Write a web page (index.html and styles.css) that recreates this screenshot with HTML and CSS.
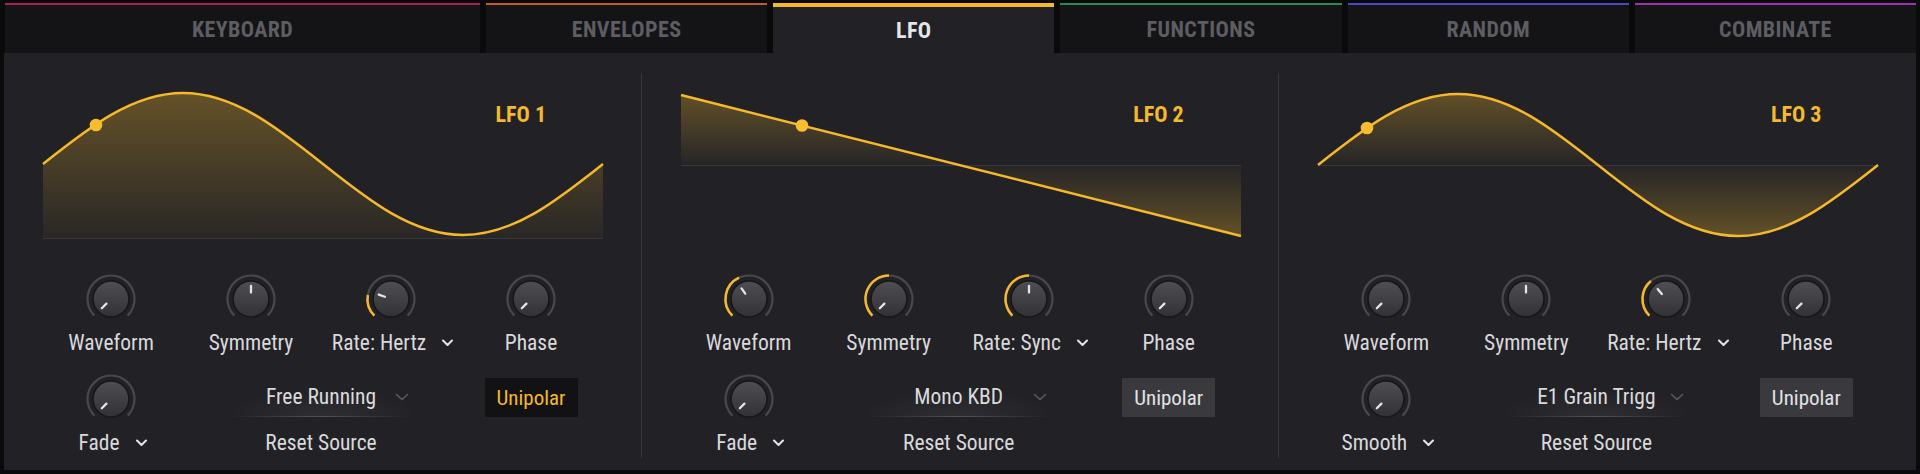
FILE: index.html
```html
<!DOCTYPE html>
<html>
<head>
<meta charset="utf-8">
<link rel="stylesheet" href="styles.css">
</head>
<body>
<svg class="defs" width="0" height="0">
  <defs>
    <linearGradient id="discGrad" x1="0" y1="0" x2="0" y2="1">
      <stop offset="0" stop-color="#4e4e53"/>
      <stop offset="1" stop-color="#323236"/>
    </linearGradient>
    <linearGradient id="fillUni" gradientUnits="userSpaceOnUse" x1="0" y1="0" x2="0" y2="150">
      <stop offset="0" stop-color="#f6b92b" stop-opacity="0.32"/>
      <stop offset="1" stop-color="#f6b92b" stop-opacity="0.03"/>
    </linearGradient>
    <linearGradient id="fillBi" gradientUnits="userSpaceOnUse" x1="0" y1="0" x2="0" y2="150">
      <stop offset="0" stop-color="#f6b92b" stop-opacity="0.32"/>
      <stop offset="0.5" stop-color="#f6b92b" stop-opacity="0.02"/>
      <stop offset="1" stop-color="#f6b92b" stop-opacity="0.32"/>
    </linearGradient>
  </defs>
</svg>
<div class="app">
  <div class="tabs">
    <div class="tab tab-wide t-key">KEYBOARD</div>
    <div class="tab t-env">ENVELOPES</div>
    <div class="tab tab-active t-lfo">LFO</div>
    <div class="tab t-fun">FUNCTIONS</div>
    <div class="tab t-rnd">RANDOM</div>
    <div class="tab t-cmb">COMBINATE</div>
  </div>
  <div class="panel">
    <!-- LFO 1 -->
    <div class="section">
      <div class="graph">
        <svg class="wave" width="560" height="150" viewBox="0 0 560 150">
          <path class="fill-uni" d="M0 74 C45.66 37.63 89.34 3 140 3 C190.66 3 234.34 37.63 280 74 C325.66 110.37 369.34 145 420 145 C470.66 145 514.34 110.37 560 74 L560 148 L0 148Z"/>
          <line class="base" x1="0" y1="148.5" x2="560" y2="148.5"/>
          <path class="line" d="M0 74 C45.66 37.63 89.34 3 140 3 C190.66 3 234.34 37.63 280 74 C325.66 110.37 369.34 145 420 145 C470.66 145 514.34 110.37 560 74"/>
          <circle class="dot" cx="53" cy="35" r="6.3"/>
        </svg>
        <div class="lfo-name">LFO 1</div>
      </div>
      <div class="controls">
        <div class="cell">
          <svg class="knob" viewBox="-27 -27 54 54"><path class="ring" d="M-16.62 16.62A23.5 23.5 0 1 1 16.62 16.62"/><circle class="disc" r="18"/><line class="ind" x1="-4.6" y1="4.6" x2="-9.2" y2="9.2"/></svg>
          <div class="label">Waveform</div>
        </div>
        <div class="cell">
          <svg class="knob" viewBox="-27 -27 54 54"><path class="ring" d="M-16.62 16.62A23.5 23.5 0 1 1 16.62 16.62"/><circle class="disc" r="18"/><line class="ind" x1="0" y1="-6.5" x2="0" y2="-13"/></svg>
          <div class="label">Symmetry</div>
        </div>
        <div class="cell">
          <svg class="knob" viewBox="-27 -27 54 54"><path class="ring" d="M-16.62 16.62A23.5 23.5 0 1 1 16.62 16.62"/><path class="arc" d="M-16.62 16.62A23.5 23.5 0 0 1 -23.14 -4.08"/><circle class="disc" r="18"/><line class="ind" x1="-6.11" y1="-2.22" x2="-12.22" y2="-4.45"/></svg>
          <div class="label label-dd">Rate: Hertz <svg class="chev" viewBox="0 0 12 8"><polyline points="1.5,1.5 6,6 10.5,1.5"/></svg></div>
        </div>
        <div class="cell">
          <svg class="knob" viewBox="-27 -27 54 54"><path class="ring" d="M-16.62 16.62A23.5 23.5 0 1 1 16.62 16.62"/><circle class="disc" r="18"/><line class="ind" x1="-4.6" y1="4.6" x2="-9.2" y2="9.2"/></svg>
          <div class="label">Phase</div>
        </div>
        <div class="cell">
          <svg class="knob" viewBox="-27 -27 54 54"><path class="ring" d="M-16.62 16.62A23.5 23.5 0 1 1 16.62 16.62"/><circle class="disc" r="18"/><line class="ind" x1="-4.6" y1="4.6" x2="-9.2" y2="9.2"/></svg>
          <div class="label label-dd">Fade <svg class="chev" viewBox="0 0 12 8"><polyline points="1.5,1.5 6,6 10.5,1.5"/></svg></div>
        </div>
        <div class="reset">
          <div class="dropdown"><span class="dd-text">Free Running</span><svg class="dd-chev" viewBox="0 0 14 8"><polyline points="1.5,1.5 7,6.5 12.5,1.5"/></svg></div>
          <div class="label reset-label">Reset Source</div>
        </div>
        <div class="cell">
          <div class="btn btn-on">Unipolar</div>
        </div>
      </div>
    </div>
    <div class="divider"></div>
    <!-- LFO 2 -->
    <div class="section">
      <div class="graph">
        <svg class="wave" width="560" height="150" viewBox="0 0 560 150">
          <path class="fill-bi" d="M0 5 L560 146 L560 75 L0 75Z"/>
          <line class="base" x1="0" y1="75.5" x2="560" y2="75.5"/>
          <path class="line" d="M0 5 L560 146"/>
          <circle class="dot" cx="121" cy="35.5" r="6.3"/>
        </svg>
        <div class="lfo-name">LFO 2</div>
      </div>
      <div class="controls">
        <div class="cell">
          <svg class="knob" viewBox="-27 -27 54 54"><path class="ring" d="M-16.62 16.62A23.5 23.5 0 1 1 16.62 16.62"/><path class="arc" d="M-16.62 16.62A23.5 23.5 0 0 1 -9.93 -21.3"/><circle class="disc" r="18"/><line class="ind" x1="-3.73" y1="-5.32" x2="-7.46" y2="-10.65"/></svg>
          <div class="label">Waveform</div>
        </div>
        <div class="cell">
          <svg class="knob" viewBox="-27 -27 54 54"><path class="ring" d="M-16.62 16.62A23.5 23.5 0 1 1 16.62 16.62"/><path class="arc" d="M-16.62 16.62A23.5 23.5 0 0 1 0 -23.5"/><circle class="disc" r="18"/><line class="ind" x1="-4.6" y1="4.6" x2="-9.2" y2="9.2"/></svg>
          <div class="label">Symmetry</div>
        </div>
        <div class="cell">
          <svg class="knob" viewBox="-27 -27 54 54"><path class="ring" d="M-16.62 16.62A23.5 23.5 0 1 1 16.62 16.62"/><path class="arc" d="M-16.62 16.62A23.5 23.5 0 0 1 0 -23.5"/><circle class="disc" r="18"/><line class="ind" x1="0" y1="-6.5" x2="0" y2="-13"/></svg>
          <div class="label label-dd">Rate: Sync <svg class="chev" viewBox="0 0 12 8"><polyline points="1.5,1.5 6,6 10.5,1.5"/></svg></div>
        </div>
        <div class="cell">
          <svg class="knob" viewBox="-27 -27 54 54"><path class="ring" d="M-16.62 16.62A23.5 23.5 0 1 1 16.62 16.62"/><circle class="disc" r="18"/><line class="ind" x1="-4.6" y1="4.6" x2="-9.2" y2="9.2"/></svg>
          <div class="label">Phase</div>
        </div>
        <div class="cell">
          <svg class="knob" viewBox="-27 -27 54 54"><path class="ring" d="M-16.62 16.62A23.5 23.5 0 1 1 16.62 16.62"/><circle class="disc" r="18"/><line class="ind" x1="-4.6" y1="4.6" x2="-9.2" y2="9.2"/></svg>
          <div class="label label-dd">Fade <svg class="chev" viewBox="0 0 12 8"><polyline points="1.5,1.5 6,6 10.5,1.5"/></svg></div>
        </div>
        <div class="reset">
          <div class="dropdown"><span class="dd-text">Mono KBD</span><svg class="dd-chev" viewBox="0 0 14 8"><polyline points="1.5,1.5 7,6.5 12.5,1.5"/></svg></div>
          <div class="label reset-label">Reset Source</div>
        </div>
        <div class="cell">
          <div class="btn">Unipolar</div>
        </div>
      </div>
    </div>
    <div class="divider"></div>
    <!-- LFO 3 -->
    <div class="section">
      <div class="graph">
        <svg class="wave" width="560" height="150" viewBox="0 0 560 150">
          <path class="fill-bi" d="M0 75 C45.66 38.63 89.34 4 140 4 C190.66 4 234.34 38.63 280 75 C325.66 111.37 369.34 146 420 146 C470.66 146 514.34 111.37 560 75Z"/>
          <line class="base" x1="0" y1="75.5" x2="560" y2="75.5"/>
          <path class="line" d="M0 75 C45.66 38.63 89.34 4 140 4 C190.66 4 234.34 38.63 280 75 C325.66 111.37 369.34 146 420 146 C470.66 146 514.34 111.37 560 75"/>
          <circle class="dot" cx="49" cy="38" r="6.3"/>
        </svg>
        <div class="lfo-name">LFO 3</div>
      </div>
      <div class="controls">
        <div class="cell">
          <svg class="knob" viewBox="-27 -27 54 54"><path class="ring" d="M-16.62 16.62A23.5 23.5 0 1 1 16.62 16.62"/><circle class="disc" r="18"/><line class="ind" x1="-4.6" y1="4.6" x2="-9.2" y2="9.2"/></svg>
          <div class="label">Waveform</div>
        </div>
        <div class="cell">
          <svg class="knob" viewBox="-27 -27 54 54"><path class="ring" d="M-16.62 16.62A23.5 23.5 0 1 1 16.62 16.62"/><circle class="disc" r="18"/><line class="ind" x1="0" y1="-6.5" x2="0" y2="-13"/></svg>
          <div class="label">Symmetry</div>
        </div>
        <div class="cell">
          <svg class="knob" viewBox="-27 -27 54 54"><path class="ring" d="M-16.62 16.62A23.5 23.5 0 1 1 16.62 16.62"/><path class="arc" d="M-16.62 16.62A23.5 23.5 0 0 1 -15.11 -18"/><circle class="disc" r="18"/><line class="ind" x1="-4.18" y1="-4.98" x2="-8.36" y2="-9.96"/></svg>
          <div class="label label-dd">Rate: Hertz <svg class="chev" viewBox="0 0 12 8"><polyline points="1.5,1.5 6,6 10.5,1.5"/></svg></div>
        </div>
        <div class="cell">
          <svg class="knob" viewBox="-27 -27 54 54"><path class="ring" d="M-16.62 16.62A23.5 23.5 0 1 1 16.62 16.62"/><circle class="disc" r="18"/><line class="ind" x1="-4.6" y1="4.6" x2="-9.2" y2="9.2"/></svg>
          <div class="label">Phase</div>
        </div>
        <div class="cell">
          <svg class="knob" viewBox="-27 -27 54 54"><path class="ring" d="M-16.62 16.62A23.5 23.5 0 1 1 16.62 16.62"/><circle class="disc" r="18"/><line class="ind" x1="-4.6" y1="4.6" x2="-9.2" y2="9.2"/></svg>
          <div class="label label-dd">Smooth <svg class="chev" viewBox="0 0 12 8"><polyline points="1.5,1.5 6,6 10.5,1.5"/></svg></div>
        </div>
        <div class="reset">
          <div class="dropdown"><span class="dd-text">E1 Grain Trigg</span><svg class="dd-chev" viewBox="0 0 14 8"><polyline points="1.5,1.5 7,6.5 12.5,1.5"/></svg></div>
          <div class="label reset-label">Reset Source</div>
        </div>
        <div class="cell">
          <div class="btn">Unipolar</div>
        </div>
      </div>
    </div>
  </div>
</div>
</body>
</html>
```

FILE: styles.css
```css
* {
  box-sizing: border-box;
  margin: 0;
  padding: 0;
}

html,
body {
  width: 1920px;
  height: 474px;
  overflow: hidden;
  background: #0a0a0b;
}

body {
  font-family: "Roboto Condensed", "Liberation Sans Narrow", "Roboto", "Liberation Sans", sans-serif;
  font-stretch: condensed;
  color: #d9d9dc;
}

.defs {
  position: absolute;
  width: 0;
  height: 0;
}

.app {
  display: flex;
  flex-direction: column;
  height: 474px;
  padding: 3px 4px 4px 4px;
}

/* ---------- tabs ---------- */
.tabs {
  display: flex;
  gap: 6px;
  height: 50px;
  padding-left: 1px;
}

.tab {
  flex: 1;
  display: flex;
  align-items: center;
  justify-content: center;
  background: #141417;
  border-top: 2px solid;
  font-size: 22px;
  font-weight: 700;
  color: #5d5d62;
  letter-spacing: 0.4px;
}

.tab-wide {
  flex: 0 0 475px;
}

.tab-active {
  background: #222226;
  color: #e6e6e9;
  border-top-width: 4px;
}

.t-key { border-top-color: #a8215a; }
.t-env { border-top-color: #c25a2a; }
.t-lfo { border-top-color: #f6b92b; }
.t-fun { border-top-color: #2b8a4f; }
.t-rnd { border-top-color: #4c45c6; }
.t-cmb { border-top-color: #a02fb2; }

/* ---------- panel ---------- */
.panel {
  flex: 1;
  display: flex;
  background: #222226;
}

.section {
  flex: 1;
  padding: 37px 0 0 39px;
}

.divider {
  width: 1px;
  margin: 20px 0 12px;
  background: #38383c;
}

.graph {
  position: relative;
  width: 560px;
  height: 150px;
}

.wave {
  display: block;
  overflow: visible;
}

.fill-uni { fill: url(#fillUni); }
.fill-bi { fill: url(#fillBi); }

.base {
  stroke: #38383c;
  stroke-width: 1;
}

.line {
  fill: none;
  stroke: #f6b92b;
  stroke-width: 2.4;
  stroke-linejoin: round;
}

.dot {
  fill: #f8bc2e;
}

.lfo-name {
  position: absolute;
  right: 57px;
  top: 12px;
  font-size: 22px;
  line-height: 26px;
  font-weight: 700;
  color: #f6b92b;
}

/* ---------- controls ---------- */
.controls {
  display: grid;
  grid-template-columns: repeat(4, 140px);
  row-gap: 17px;
  margin-top: 32px;
  margin-left: -2px;
}

.cell {
  display: flex;
  flex-direction: column;
  align-items: center;
}

.knob {
  display: block;
  width: 54px;
  height: 54px;
  overflow: visible;
}

.ring {
  fill: none;
  stroke: #48484d;
  stroke-width: 2.2;
}

.arc {
  fill: none;
  stroke: #f6b92b;
  stroke-width: 2.5;
}

.disc {
  fill: url(#discGrad);
  stroke: #17171a;
  stroke-width: 1.6;
}

.ind {
  stroke: #e4e4e6;
  stroke-width: 2.3;
  stroke-linecap: round;
}

.label {
  display: flex;
  align-items: center;
  gap: 10px;
  height: 24px;
  margin-top: 5px;
  font-size: 21.5px;
  line-height: 24px;
  white-space: nowrap;
}

.label-dd {
  gap: 15px;
  padding-left: 4px;
}

.chev {
  width: 13px;
  height: 8px;
  fill: none;
  stroke: #e4e4e6;
  stroke-width: 2.1;
  stroke-linecap: round;
  stroke-linejoin: round;
}

.reset {
  grid-column: span 2;
  display: flex;
  flex-direction: column;
  align-items: center;
}

.dropdown {
  display: grid;
  grid-template-columns: 1fr auto 1fr;
  align-items: center;
  width: 180px;
  height: 40px;
  margin-top: 5px;
  background:
    linear-gradient(90deg, rgba(255, 255, 255, 0), rgba(255, 255, 255, 0.17) 50%, rgba(255, 255, 255, 0)) bottom / 100% 1px no-repeat,
    radial-gradient(ellipse 55% 70% at 50% 100%, rgba(255, 255, 255, 0.06), rgba(255, 255, 255, 0));
}

.dd-text {
  grid-column: 2;
  font-size: 21.5px;
  line-height: 24px;
  color: #dadadd;
  white-space: nowrap;
}

.dd-chev {
  grid-column: 3;
  justify-self: end;
  width: 14px;
  height: 8px;
  margin-right: 2px;
  fill: none;
  stroke: #5a5a5f;
  stroke-width: 1.6;
  stroke-linecap: round;
  stroke-linejoin: round;
}

.reset-label {
  margin-top: 14px;
}

.btn {
  display: flex;
  align-items: center;
  justify-content: center;
  width: 93px;
  height: 39px;
  margin-top: 6px;
  background: #3a3a3e;
  border-radius: 1px;
  font-size: 21px;
  color: #e2e2e5;
}

.btn-on {
  background: #121214;
  color: #f6b92b;
}
```
